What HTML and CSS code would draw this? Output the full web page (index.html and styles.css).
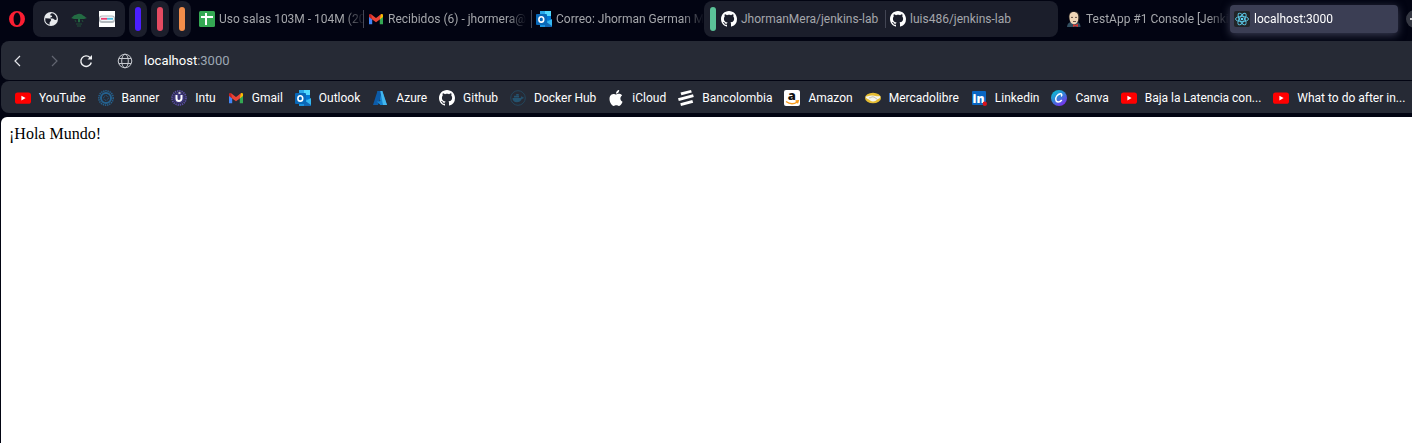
FILE: index.html
```html
<!DOCTYPE html>
<html lang="es">
<head>
<meta charset="utf-8">
<title>localhost:3000</title>
<link rel="stylesheet" href="styles.css">
</head>
<body>
<svg class="sprite" aria-hidden="true">
  <symbol id="github" viewBox="0 0 16 16"><path fill="#fff" d="M8 0C3.58 0 0 3.58 0 8c0 3.54 2.29 6.53 5.47 7.59.4.07.55-.17.55-.38 0-.19-.01-.82-.01-1.49-2.01.37-2.53-.49-2.69-.94-.09-.23-.48-.94-.82-1.13-.28-.15-.68-.52-.01-.53.63-.01 1.08.58 1.23.82.72 1.21 1.87.87 2.33.66.07-.52.28-.87.51-1.07-1.78-.2-3.64-.89-3.64-3.95 0-.87.31-1.59.82-2.15-.08-.2-.36-1.02.08-2.12 0 0 .67-.21 2.2.82.64-.18 1.32-.27 2-.27s1.36.09 2 .27c1.53-1.04 2.2-.82 2.2-.82.44 1.1.16 1.92.08 2.12.51.56.82 1.27.82 2.15 0 3.07-1.87 3.75-3.65 3.95.29.25.54.73.54 1.48 0 1.07-.01 1.93-.01 2.2 0 .21.15.46.55.38A8.01 8.01 0 0 0 16 8c0-4.42-3.58-8-8-8z"/></symbol>
  <symbol id="gmail" viewBox="0 0 16 16"><path fill="#4285f4" d="M1 4v9.3h3.2V7z"/><path fill="#34a853" d="M15 4v9.3h-3.2V7z"/><path fill="#c5221f" d="M1 4.2V6l3.2 2.4V4.6L3 3.2C2 2.6 1 3.2 1 4.2z"/><path fill="#fbbc04" d="M15 4.2V6l-3.2 2.4V4.6L13 3.2c1-.6 2 0 2 1z"/><path fill="#ea4335" d="M3 3.2l5 3.9 5-3.9-1.2 5.2L8 11.2 4.2 8.4z"/></symbol>
  <symbol id="outlook" viewBox="0 0 16 16"><path fill="#1490df" d="M4 1h5v6H4z"/><path fill="#28a8ea" d="M4 0h5.5v5H4z"/><path fill="#50d9ff" d="M9 0h6v5H9z"/><path fill="#0078d4" d="M9 5h6v5H9z"/><path fill="#0f5ea8" d="M4 5h5v6H4z"/><path fill="#1993e0" d="M4 9.5h12V16H4z"/><path fill="#35b8f1" d="M16 8v8L9 12z"/><path fill="#1267b4" d="M9 10l7 5V16H9z"/><rect y="3" width="11" height="11" rx="1" fill="#0868b8"/><ellipse cx="5.3" cy="8.4" rx="2.4" ry="2.7" fill="none" stroke="#fff" stroke-width="1.6"/></symbol>
  <symbol id="youtube" viewBox="0 0 16 16"><rect y="2.4" width="16" height="11.4" rx="2.6" fill="#f00"/><path fill="#fff" d="M6.4 5.7v4.8l4.2-2.4z"/></symbol>
</svg>

<header class="tabs">
  <button class="opera" aria-label="Menú"><svg class="icon" viewBox="0 0 16 16"><path fill="#fa1e32" fill-rule="evenodd" d="M8 0a8 8 0 1 0 0 16A8 8 0 0 0 8 0zm0 1.800c2 0 3.400 2.600 3.400 6.200S10 14.200 8 14.200 4.600 11.600 4.600 8 6 1.800 8 1.800z"/></svg></button>
  <div class="group pinned">
    <svg class="icon" viewBox="0 0 16 16"><circle cx="8" cy="8" r="7" fill="#e8eaed"/><path fill="#1b1e2b" d="M2.300 7.200l4 .2c1.700.1 2.400 1.600 1.400 2.700L6.600 11.400v2.300A6 6 0 0 1 2.300 7.200zM9 2.200c-1.300.4-2 1.200-1.600 2 .5.800 2 .3 1.700 1.200-.2.800-1.900.5-1.900 1.500 0 .8 1.200.6 2.300.6 1.500 0 1.500 1.700 3.200 1.600l1-.6C14 5.500 12 2.800 9 2.200z"/></svg>
    <svg class="icon" viewBox="0 0 16 16"><path d="M0 7c2-1 2-3 5-3.300C8 2 11 3 12 4.400c2 .3 2 2 4 2.600l-3 1H9v3.300H7V8H3z" fill="#236b43"/><path d="M4 9l1 2m6-2l1 2M5 13h6M6 15h4" stroke="#205139" fill="none"/></svg>
    <svg class="icon" viewBox="0 0 16 16"><path fill="#fff" d="M0 0h16v16H0z"/><rect y="4.500" width="16" height="7.500" rx="3" fill="#b2b8bd"/><rect x="1" y="5.500" width="14" height="4.500" rx="2" fill="#f2f7fa"/><path d="M2 7.800h6" stroke="#ed3c72" stroke-width="1.800"/><path d="M8 7.800h6" stroke="#50bee0" stroke-width="1.800"/></svg>
  </div>
  <button class="group island" aria-label="Grupo violeta"><span class="bar violet"></span></button>
  <button class="group island" aria-label="Grupo rojo"><span class="bar red"></span></button>
  <button class="group island" aria-label="Grupo naranja"><span class="bar orange"></span></button>
  <div class="set loose">
    <button class="tab"><svg class="icon" viewBox="0 0 16 16"><rect width="16" height="16" rx="1.500" fill="#34a853"/><path d="M2 6h12M7 2v12" stroke="#fff" stroke-width="2"/></svg><span class="label">Uso salas 103M - 104M (20</span></button>
    <button class="tab"><svg class="icon"><use href="#gmail"/></svg><span class="label">Recibidos (6) - jhormera@</span></button>
    <button class="tab"><svg class="icon"><use href="#outlook"/></svg><span class="label">Correo: Jhorman German M</span></button>
  </div>
  <div class="group set named">
    <span class="bar green"></span>
    <button class="tab"><svg class="icon"><use href="#github"/></svg><span class="label">JhormanMera/jenkins-lab</span></button>
    <button class="tab"><svg class="icon"><use href="#github"/></svg><span class="label">luis486/jenkins-lab</span></button>
  </div>
  <div class="set last">
    <button class="tab"><svg class="icon" viewBox="0 0 16 16"><path fill="#335061" d="M1 16c0-3 2-4.500 4-5h6c2 .5 3.500 2 3.500 5z"/><path fill="#302b28" d="M3 8C2 3 4 .3 8 .3S14 3 13.500 8l-1 3H4z"/><path fill="#f0d6b7" d="M3.500 7C3 3 5 1 7.600 1c3.300 0 5 2 4.700 6-.2 4-1.500 6-4 6.200C5 13 4 11 3.500 7z"/><path stroke="#665347" d="M5 6.400h2m2 0h2M7 10.500h3" fill="none"/><path fill="#d33833" d="M7 13l2 1 3-1.200V16l-3-1-2 1z"/></svg><span class="label">TestApp #1 Console [Jenki</span></button>
    <button class="tab active"><svg class="icon" viewBox="0 0 16 16"><rect width="16" height="16" rx="2" fill="#222528"/><g fill="none" stroke="#5ccbe9" stroke-width=".9"><ellipse cx="8" cy="8" rx="6.500" ry="2.600"/><ellipse cx="8" cy="8" rx="6.500" ry="2.600" transform="rotate(60 8 8)"/><ellipse cx="8" cy="8" rx="6.500" ry="2.600" transform="rotate(120 8 8)"/></g><circle cx="8" cy="8" r="1.300" fill="#61dafb"/></svg><span class="label">localhost:3000</span></button>
  </div>
  <button class="add" aria-label="Nueva pestaña"><svg class="icon" viewBox="0 0 16 16"><path d="M3 8h10M8 3v10" stroke="#fff" stroke-width="1.500"/></svg></button>
</header>

<nav class="toolbar" aria-label="Navegación">
  <button aria-label="Atrás"><svg class="icon" viewBox="0 0 16 16"><path d="M10 3L5 8l5 5" fill="none" stroke="#e4e6ea" stroke-width="1.200"/></svg></button>
  <button aria-label="Adelante"><svg class="icon" viewBox="0 0 16 16"><path d="M8 3l5 5-5 5" fill="none" stroke="#626671" stroke-width="1.200"/></svg></button>
  <button aria-label="Recargar"><svg class="icon" viewBox="0 0 16 16"><path d="M13.300 9.500A5.300 5.300 0 1 1 12 4.500l1 1" fill="none" stroke="#f1f2f4" stroke-width="1.400"/><path d="M14 2v4.500H9.500z" fill="#f1f2f4"/></svg></button>
  <div class="address"><svg class="icon" viewBox="0 0 16 16"><g fill="none" stroke="#c5c8ce"><circle cx="8" cy="8" r="6.800"/><ellipse cx="8" cy="8" rx="3.300" ry="6.800"/><path d="M2 5.500h12M2 10.500h12"/></g></svg><a class="url" href="#">localhost<span class="port">:3000</span></a></div>
</nav>

<nav class="bookmarks" aria-label="Marcadores">
  <a href="#"><svg class="icon"><use href="#youtube"/></svg>YouTube</a>
  <a href="#"><svg class="icon" viewBox="0 0 16 16"><g fill="none" stroke="#24618f"><circle cx="8" cy="8" r="7.200" stroke-width="1.500" stroke-dasharray="1.400 .8"/><circle cx="8" cy="8" r="5" stroke-width="2"/><circle cx="8" cy="8" r="2.300" stroke-dasharray="1 .6"/></g></svg>Banner</a>
  <a href="#"><svg class="icon" viewBox="0 0 16 16"><circle cx="8" cy="8" r="7" fill="none" stroke="#584ca0" stroke-width="1.800" stroke-dasharray="1.400 .8"/><circle cx="8" cy="8" r="5.800" fill="#3d367a"/><path d="M5.500 5v3.500a2.500 2.500 0 0 0 5 0V5" fill="none" stroke="#fff" stroke-width="2"/><path d="M7.500 3h2" stroke="#fff" stroke-width="1.500"/></svg>Intu</a>
  <a href="#"><svg class="icon"><use href="#gmail"/></svg>Gmail</a>
  <a href="#"><svg class="icon"><use href="#outlook"/></svg>Outlook</a>
  <a href="#"><svg class="icon" viewBox="0 0 16 16"><path fill="#1683cf" d="M5.500 1h4.800L15 15H9l-4-3.500 3.500-.2z"/><path fill="#0c5ba8" d="M5.500 1h4.700L6 15H1z"/><path fill="#42b6ee" d="M8.300 1h2L15 15h-4z"/><path fill="#1682d0" d="M7 8.500l4 6.500H8.500L4.600 11.500h3.600z"/></svg>Azure</a>
  <a href="#"><svg class="icon"><use href="#github"/></svg>Github</a>
  <a href="#"><svg class="icon" viewBox="0 0 16 16"><circle cx="8" cy="8" r="7.300" fill="none" stroke="#24465c"/><path fill="#24536f" d="M2.500 8h8c.8-.3.700-1.500 1.200-2l1 1.200 1.200.2c-.4 1-1 1.300-2 1.300-1 2.500-3 3.500-5 3.500-3 0-4.400-1.500-4.400-4.200zM4 5.800h5v1.700H4zM6.200 4h2.500v1.500H6.200z"/></svg>Docker Hub</a>
  <a href="#"><svg class="icon" viewBox="0 0 24 24"><path fill="#fff" d="M12.152 6.896c-.948 0-2.415-1.078-3.960-1.040-2.040.027-3.910 1.183-4.961 3.014-2.117 3.675-.546 9.103 1.519 12.090 1.013 1.454 2.208 3.090 3.792 3.039 1.520-.065 2.090-.987 3.935-.987 1.831 0 2.350.987 3.960.948 1.637-.026 2.676-1.480 3.676-2.948 1.156-1.688 1.636-3.325 1.662-3.415-.039-.013-3.182-1.221-3.220-4.857-.026-3.040 2.480-4.494 2.597-4.559-1.429-2.090-3.623-2.324-4.390-2.376-2-.156-3.675 1.090-4.610 1.090zM15.530 3.830c.843-1.012 1.400-2.427 1.245-3.830-1.207.052-2.662.805-3.532 1.818-.780.896-1.454 2.338-1.273 3.714 1.338.104 2.715-.688 3.559-1.701"/></svg>iCloud</a>
  <a href="#"><svg class="icon" viewBox="0 0 16 16"><path fill="#fff" d="M2.500 2.500L13 0l.8 2.600L3.400 5.300zM0 8.200l15-4 .8 2.900L.8 11zM2.300 13.300l12-3.300.9 2.700L3 16z"/></svg>Bancolombia</a>
  <a href="#"><svg class="icon" viewBox="0 0 16 16"><rect width="16" height="16" rx="2" fill="#fff"/><text class="amazon-mark" x="7.800" y="10">a</text><path d="M2 11.500c3.500 2.700 8 2.700 11.300.5M11.500 11l2.800-.2-.8 2.600" fill="none" stroke="#f79a1c" stroke-width="1.400"/></svg>Amazon</a>
  <a href="#"><svg class="icon" viewBox="0 0 16 16"><ellipse cx="8" cy="8" rx="8" ry="5.300" fill="#e5bc32"/><path fill="#f5f5ee" d="M.8 6.200C3 7 4.500 5 7 5.600 9 4.800 12 7 15.200 6c.4 2-1 2.700-2.800 3.300-1.400 1.600-3 2.300-4.500 2.200C6 11.300 5 10.300 3.600 9.300 1.700 8.600.4 7.700.8 6.200z"/><path d="M4 7.800c2 .5 2.300-1.200 4-1 1.500.2 2.500 1.500 4 2.300" fill="none" stroke="#aaa68c" stroke-width=".7"/></svg>Mercadolibre</a>
  <a href="#"><svg class="icon" viewBox="0 0 16 16"><rect x="1" y="1" width="14" height="14" rx="1" fill="#0a66c2"/><text class="linkedin-mark" x="7.500" y="12.500">in</text><circle cx="13.800" cy="13.800" r="2.200" fill="#d8131d"/></svg>Linkedin</a>
  <a href="#"><svg class="icon" viewBox="0 0 16 16"><defs><linearGradient id="canva" x1="0" y1="0" x2=".7" y2="1"><stop stop-color="#00c9cf"/><stop offset=".5" stop-color="#2f86d6"/><stop offset="1" stop-color="#7b2fee"/></linearGradient></defs><circle cx="8" cy="8" r="8" fill="url(#canva)"/><path d="M10 6.300c1.500-1 .8-2.800-.8-2.500C6.500 4.300 4.500 7 4.800 9.700c.3 3.300 4.200 2.800 6 .3" fill="none" stroke="#fff" stroke-width="1.400"/></svg>Canva</a>
  <a href="#"><svg class="icon"><use href="#youtube"/></svg>Baja la Latencia con...</a>
  <a href="#"><svg class="icon"><use href="#youtube"/></svg>What to do after in...</a>
</nav>

<main class="page">¡Hola Mundo!</main>
</body>
</html>
```
FILE: styles.css
```css
* { box-sizing: border-box; }

html, body { height: 100%; }

body {
  display: flex;
  flex-direction: column;
  margin: 0;
  overflow: hidden;
  background: #020412;
  color: #fff;
  font-family: "Segoe UI", Roboto, "Noto Sans", sans-serif;
  font-size: 12px;
  line-height: 18px;
}

button {
  padding: 0;
  border: 0;
  background: none;
  color: inherit;
  font: inherit;
}

a { color: inherit; text-decoration: none; }

.sprite { display: none; }
.icon { flex: none; display: block; width: 16px; height: 16px; }

.tabs {
  display: flex;
  flex: none;
  height: 41px;
  padding: 1px 0 4px;
  overflow: hidden;
}

.opera { flex: none; width: 33px; padding-left: 9px; }

.group { flex: none; border-radius: 8px; background: #1b1e2b; }

.pinned {
  display: flex;
  align-items: center;
  gap: 12px;
  padding: 0 10px;
}

.island { width: 18px; margin-left: 4px; }

.bar {
  display: block;
  flex: none;
  width: 6px;
  height: 24px;
  margin: 0 auto;
  border-radius: 3px;
}

.violet { background: #4b1fff; }
.red { background: #e54b62; }
.orange { background: #f28d4a; }
.green { background: #5bc298; }

.set { display: flex; align-items: center; }
.loose { margin-left: 4px; }
.named { margin-left: 5px; padding: 0 5px 0 6px; }
.named .bar { margin: 0 1px 0 0; }
.last { margin-left: 4px; }

.tab {
  display: flex;
  align-items: center;
  gap: 4px;
  flex: none;
  width: 168px;
  height: 28px;
  padding: 0 4px;
  border-radius: 4px;
  color: #a5a7ab;
  text-align: left;
}

.tab + .tab:not(.active) {
  border-left: 1px solid #434654;
  border-radius: 0;
  height: 18px;
}

.label {
  flex: 1;
  white-space: nowrap;
  mask-image: linear-gradient(to right, #000 85%, transparent);
}

.named .label { mask-image: none; }

.active {
  background: #3b3e54;
  color: #fff;
  box-shadow: 0 2px 8px #3b3e54;
}

.add {
  display: flex;
  align-items: center;
  justify-content: center;
  align-self: center;
  flex: none;
  width: 18px;
  height: 18px;
  margin-left: 8px;
  border-radius: 50%;
  background: #343742;
}

.toolbar, .bookmarks {
  display: flex;
  align-items: center;
  flex: none;
  margin-left: 1px;
  background: #262a35;
}

.toolbar {
  gap: 18px;
  height: 39px;
  padding-left: 9px;
  border-radius: 8px 0 0 8px;
}

.address {
  display: flex;
  align-items: center;
  flex: 1;
  gap: 11px;
  margin-left: 5px;
  font-size: 13px;
}

.port { color: #9da7b3; }

.bookmarks {
  gap: 12px;
  height: 32px;
  margin-top: 1px;
  padding: 2px 0 0 14px;
  border-radius: 8px 0 0 8px;
  overflow: hidden;
}

.bookmarks a {
  display: flex;
  align-items: center;
  flex: none;
  gap: 8px;
  white-space: nowrap;
}

.amazon-mark, .linkedin-mark {
  font-family: "Open Sans", sans-serif;
  font-weight: 800;
  text-anchor: middle;
}

.amazon-mark { fill: #111; font-size: 13px; }
.linkedin-mark { fill: #fff; font-size: 12px; }

.page {
  flex: 1;
  margin: 4px 0 0 1px;
  padding: 8px;
  border-radius: 6px 0 0;
  background: #fff;
  color: #000;
  font: 16px/18px "Liberation Serif", serif;
}
```
